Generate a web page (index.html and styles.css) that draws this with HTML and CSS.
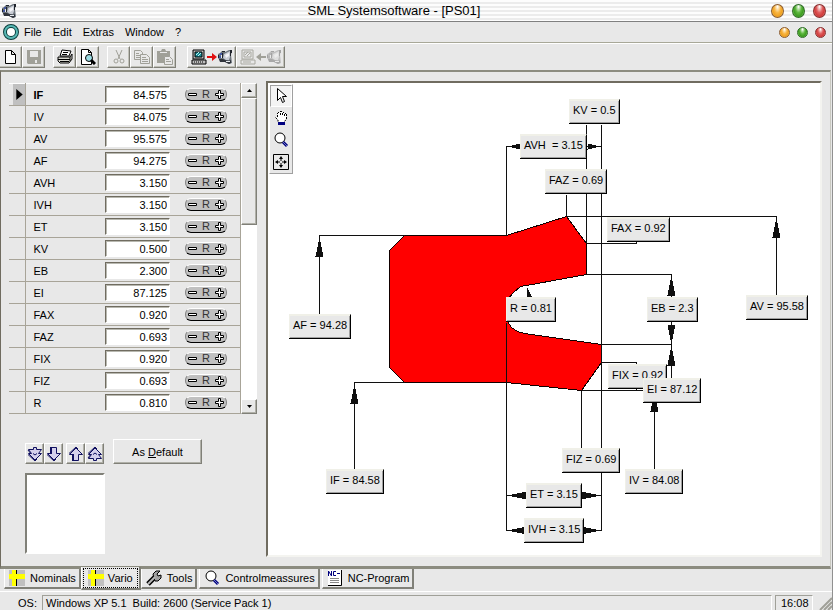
FILE: index.html
```html
<!DOCTYPE html>
<html lang="en">
<head>
    <meta charset="UTF-8">
    <meta name="viewport" content="width=device-width, initial-scale=1.0">
    <title>SML Systemsoftware - [PS01]</title>
    <link rel="stylesheet" href="styles.css">
</head>
<body>
    <!-- shared icons -->
    <svg class="sprite" aria-hidden="true">
        <symbol id="machine" viewBox="0 0 16 16">
            <path d="M1 5 3 4 5 2 8 3 12 1 15 1 14 6 15 14 12 15 8 13 3 12 1 9Z" fill="#6c747c"/>
            <path d="M7 5 13 2 13 8 12 11 9 11 6 9Z" fill="#c8ccd4"/>
            <path d="M8 6 12 4 12 7 9 9Z" fill="#f4f4f8"/>
            <path d="M5 2h3v1H5ZM1 6h1v3H1ZM5 4h1v5H5ZM13 1h2v3h-1v3h-1Z" fill="#20242c"/>
            <path d="M2 10h4l2 1 4 1 2-1v3l-2 1-4-2H3Z" fill="#30343c"/>
            <path d="M3 4h2v2H3ZM2 7h2v2H2Z" fill="#4458a0"/>
            <path d="M4 6h1v3H4ZM9 12h4v1H9Z" fill="#e8ecf0"/>
        </symbol>
        <symbol id="pc" viewBox="0 0 16 16">
            <path d="M2 1h11v9H2Z" fill="#c0c0c0" stroke="#000"/>
            <path d="M4 3h7v5H4Z" fill="#1b8c96" stroke="#000"/>
            <path d="M5 6 8 3M7 7l3-3" stroke="#b8f4f4"/>
            <path d="M1 11h14v4H1Z" fill="#c0c0c0" stroke="#000"/>
            <path d="M3 13h10" stroke="#000" stroke-dasharray="1 1"/>
        </symbol>
        <symbol id="pc-off" viewBox="0 0 16 16">
            <path d="M2 1h11v9H2ZM4 3h7v5H4ZM1 11h14v4H1ZM5 6l3-3M7 7l3-3M3 13h8" fill="none" stroke="#a8a8a0"/>
        </symbol>
        <symbol id="lens" viewBox="0 0 16 16">
            <circle cx="7" cy="6" r="5" fill="#fff" stroke="#000"/>
            <path d="m10 10 4 4" stroke="#000080" stroke-width="3"/>
            <path d="m10 10 4 4" stroke="#7078c0"/>
        </symbol>
        <symbol id="cross" viewBox="0 0 16 16">
            <path d="M0 0h16v16H0Z" fill="#c0c0c0"/>
            <path d="M0 4h16v5H0ZM3 0h4v16H3Z" fill="#ff0"/>
            <path d="M7 0h1v4H7ZM7 9h1v7H7Z" fill="#000"/>
        </symbol>
        <symbol id="minus" viewBox="0 0 11 11">
            <path d="M1.500 4.500h8v2h-8Z" fill="#fff" stroke="#000"/>
        </symbol>
        <symbol id="plus" viewBox="0 0 11 11">
            <path d="M4.500 1.500h2v3h3v2h-3v3h-2v-3h-3v-2h3Z" fill="#fff" stroke="#000"/>
        </symbol>
        <symbol id="arrow" viewBox="0 0 16 16">
            <path d="M5.500 1.500h5v6h4L8 14 1.500 7.500h4Z" fill="#d4d0ec" stroke="#101060"/>
            <path d="M1 8.500 8 15l2-2" fill="none" stroke="#101060"/>
            <path d="M5 1v7" stroke="#101060" stroke-width="2"/>
        </symbol>
        <symbol id="arrow2" viewBox="0 0 16 16">
            <path d="M6.500 1.500h3v2h5l-3 4h3L8 14 1.500 7.500h3l-3-4h5Z" fill="#d4d0ec" stroke="#101060"/>
            <path d="m1 4 3 4M1 8.500 8 15l2-2" fill="none" stroke="#101060"/>
            <path d="M6 7.500 8 9l2-1.500" fill="none" stroke="#101060"/>
        </symbol>
    </svg>

    <header class="titlebar">
        <svg class="icon"><use href="#machine"/></svg>
        <h1>SML Systemsoftware - [PS01]</h1>
        <div class="orbs">
            <button class="orb yellow" aria-label="Minimize"></button>
            <button class="orb green" aria-label="Maximize"></button>
            <button class="orb red" aria-label="Close"></button>
        </div>
    </header>

    <nav class="menubar">
        <svg class="icon" viewBox="0 0 16 16">
            <circle cx="8" cy="8" r="6" fill="#fff" stroke="#0a3c3c" stroke-width="4"/>
            <circle cx="8" cy="8" r="6" fill="none" stroke="#58b8b4" stroke-width="2"/>
        </svg>
        <button>File</button>
        <button>Edit</button>
        <button>Extras</button>
        <button>Window</button>
        <button>?</button>
        <div class="orbs small">
            <button class="orb yellow" aria-label="Minimize document"></button>
            <button class="orb green" aria-label="Restore document"></button>
            <button class="orb red" aria-label="Close document"></button>
        </div>
    </nav>

    <div class="toolbar">
        <div class="group">
            <button aria-label="New">
                <svg class="icon" viewBox="0 0 16 16"><path d="M2.500 1.500h6l4 4v9h-10ZM8.500 1.500v4h4" fill="#fff" stroke="#000"/></svg>
            </button>
            <button aria-label="Save" disabled>
                <svg class="icon" viewBox="0 0 16 16"><path d="M1 1h14v14H2L1 14Z" fill="#a0a098"/><path d="M4 2h8v6H4ZM9 11h2v3H9Z" fill="#e8e8e8"/></svg>
            </button>
        </div>
        <div class="group">
            <button aria-label="Print">
                <svg class="icon" viewBox="0 0 16 16"><path d="m5 1 9 1-2 5H3Z" fill="#fff" stroke="#000"/><path d="M6 3.500h5M5 5.500h5" stroke="#000"/><path d="M1 8h12l2-3v5l-3 4H3l-2-2Z" fill="#d8d8d0" stroke="#000"/><path d="M1 10.500h12M3 12.500h9M13 8v4" stroke="#000"/></svg>
            </button>
            <button aria-label="Preview">
                <svg class="icon" viewBox="0 0 16 16"><path d="M1.500.5h7l3 3v12h-10ZM8.500.5v3h3" fill="#fff" stroke="#000"/><circle cx="9" cy="9" r="3.500" fill="#9cdce4" stroke="#000"/><path d="m11 11 4 4" stroke="#000" stroke-width="3"/></svg>
            </button>
        </div>
        <div class="group">
            <button aria-label="Cut" disabled>
                <svg class="icon" viewBox="0 0 16 16"><path d="m5 1 4 9M11 1 7 10" fill="none" stroke="#a0a098"/><circle cx="5" cy="12" r="2" fill="none" stroke="#a0a098"/><circle cx="11" cy="12" r="2" fill="none" stroke="#a0a098"/></svg>
            </button>
            <button aria-label="Copy" disabled>
                <svg class="icon" viewBox="0 0 16 16"><path d="M.5 1.500h6l2 2v7h-8ZM2 4.500h3M2 6.500h4M2 8.500h4" fill="none" stroke="#a0a098"/><path d="M6.500 5.500h6l3 3v6h-9Z" fill="#e8e8e8" stroke="#a0a098"/><path d="M8 8.500h4M8 10.500h6M8 12.500h6" stroke="#a0a098"/></svg>
            </button>
            <button aria-label="Paste" disabled>
                <svg class="icon" viewBox="0 0 16 16"><path d="M0 2h4l1-2h3l1 2h4v12H0Z" fill="#a0a098"/><path d="M3 3.500h7" stroke="#e8e8e8"/><path d="M7.500 7.500h5l3 3v5h-8Z" fill="#e8e8e8" stroke="#a0a098"/><path d="M9 10.500h3M9 12.500h5" stroke="#a0a098"/></svg>
            </button>
        </div>
        <div class="group transfer">
            <button class="wide" aria-label="Send to machine">
                <svg class="icon"><use href="#pc"/></svg>
                <svg class="mini" viewBox="0 0 10 10"><path d="M0 4h5V1l5 4-5 4V6H0Z" fill="#e01010"/></svg>
                <svg class="icon"><use href="#machine"/></svg>
            </button>
            <button class="wide" aria-label="Read from machine" disabled>
                <svg class="icon"><use href="#pc-off"/></svg>
                <svg class="mini" viewBox="0 0 10 10"><path d="M10 4H5V1L0 5l5 4V6h5Z" fill="#a0a098"/></svg>
                <svg class="icon faded"><use href="#machine"/></svg>
            </button>
        </div>
    </div>

    <main class="page">
        <section class="sidebar">
            <div class="grid">
                <table>
                    <tbody id="params"></tbody>
                </table>
                <div class="scrollbar">
                    <button aria-label="Scroll up"><svg viewBox="0 0 5 3"><path d="M0 3h5L2.500 0Z"/></svg></button>
                    <div class="thumb"></div>
                    <button class="down" aria-label="Scroll down"><svg viewBox="0 0 5 3"><path d="M0 0h5L2.500 3Z"/></svg></button>
                </div>
            </div>
            <div class="actions">
                <div class="pair">
                    <button aria-label="Much smaller"><svg class="icon"><use href="#arrow2"/></svg></button>
                    <button aria-label="Smaller"><svg class="icon"><use href="#arrow"/></svg></button>
                </div>
                <div class="pair up">
                    <button aria-label="Larger"><svg class="icon"><use href="#arrow"/></svg></button>
                    <button aria-label="Much larger"><svg class="icon"><use href="#arrow2"/></svg></button>
                </div>
                <button class="default">As <u>D</u>efault</button>
            </div>
            <div class="preview"></div>
        </section>

        <section class="canvas">
            <svg class="drawing" viewBox="0 0 552 472" width="552" height="472">
                <g transform="translate(.5 .5)">
                    <path class="part" d="M136 152H238L298 133L318 160V191L258 202L252 203L245 209L239 216V238L243 244L249 248L256 250L333 261V279L313 307L238 299H136L121 284V167Z"/>
                    <path class="dim" d="M136 152H51V231M136 299H86V386M238 152V63H252M318 63H333
                        M318 41V160M333 41V447M298 111V133H508V212M318 160H368V158
                        M318 191H403V296M333 261H403M333 279H368V281M313 307H386V386M368 307V305
                        M313 307V365M238 239V447M238 412H333M238 447H333"/>
                    <g class="tip">
                        <path d="M51 154 55 173H47ZM86 301 90 320H82ZM508 134 512 154H504Z"/>
                        <path d="M403 192 407 212H399ZM403 261 407 241H399ZM403 262 407 282H399ZM386 308 390 328H382Z"/>
                        <path d="M239 63 252 60V66ZM332 63 319 60V66ZM258 203 264 215H259Z"/>
                        <path d="M239 412 258 408V416ZM332 412 313 408V416ZM239 447 258 443V451ZM332 447 313 443V451Z"/>
                    </g>
                </g>
            </svg>
            <span class="tag kv">KV = 0.5</span>
            <span class="tag avh">AVH&nbsp; = 3.15</span>
            <span class="tag faz">FAZ = 0.69</span>
            <span class="tag fax">FAX = 0.92</span>
            <span class="tag av">AV = 95.58</span>
            <span class="tag eb">EB = 2.3</span>
            <span class="tag r">R = 0.81</span>
            <span class="tag af">AF = 94.28</span>
            <span class="tag if">IF = 84.58</span>
            <span class="tag fix">FIX = 0.92</span>
            <span class="tag ei">EI = 87.12</span>
            <span class="tag fiz">FIZ = 0.69</span>
            <span class="tag iv">IV = 84.08</span>
            <span class="tag et">ET = 3.15</span>
            <span class="tag ivh">IVH = 3.15</span>

            <div class="palette">
                <button class="pressed" aria-label="Select"><svg class="icon" viewBox="0 0 16 16"><path d="M4.500.5v12l3-3 2 5 2-1-2-5h4Z" fill="#fff" stroke="#000"/></svg></button>
                <button aria-label="Pan"><svg class="icon" viewBox="0 0 16 16"><path d="M5 12V10L2.500 7.500 4 7l1 1V2.500h2V1.500h2v1h2v1h2V9l-2 3Z" fill="#fff"/><path d="M5 11.500V10L2.500 7.500M4.500 7V3M5 2.500h1M7 1.500h2M10 2.500h1M12 3.500h1M13.500 4v5l-2 2.500M7.500 3v3M9.500 3v3M11.500 4v3" fill="none" stroke="#000" stroke-dasharray="2 1"/><path d="M5 12h7v3H5Z" fill="#000080"/></svg></button>
                <button aria-label="Zoom"><svg class="icon"><use href="#lens"/></svg></button>
                <button aria-label="Fit"><svg class="icon" viewBox="0 0 16 16"><path d="M.5.5h15v15H.5Z" fill="#e8e8e8" stroke="#000"/><path d="M8 2 6 5h4ZM8 14l-2-3h4ZM2 8l3-2v4ZM14 8l-3-2v4Z"/><path d="M8 5v2M8 9v2M5 8h2M9 8h2" stroke="#000"/></svg></button>
            </div>
        </section>
    </main>

    <nav class="tabs">
        <button><svg class="icon"><use href="#cross"/></svg>Nominals</button>
        <button class="active"><span><svg class="icon"><use href="#cross"/></svg>Vario</span></button>
        <button><svg class="icon" viewBox="0 0 16 16"><path d="m2 14 7-7" stroke="#000" stroke-width="5"/><path d="M8 8 7 4l3-3h4l-3 3 1 2 3-1v3l-3 3H9Z" fill="#a0a0a0" stroke="#000"/><path d="m2 14 7-7" stroke="#b8b8b8" stroke-width="2"/></svg>Tools</button>
        <button><svg class="icon"><use href="#lens"/></svg>Controlmeassures</button>
        <button><svg class="icon" viewBox="0 0 16 16"><path d="M1 0h13v15H1Z" fill="#fff"/><path d="M14.500 0v15.500H1" fill="none" stroke="#000"/><path d="M1.500 6V1l3 5V1M9 1.500H6.500v4H9M10 3.500h3" fill="none" stroke="#000080"/><path d="M3 8.500h9M3 10.500h9M3 12.500h9" stroke="#888"/></svg>NC-Program</button>
    </nav>

    <footer class="status">
        <span class="os">OS:</span>
        <span class="field">Windows XP 5.1&nbsp; Build: 2600 (Service Pack 1)</span>
        <span class="field clock">16:08</span>
        <svg class="grip" viewBox="0 0 13 13"><path d="M1 13 13 1M5 13l8-8M9 13l4-4" stroke="#a0a098" stroke-width="2"/></svg>
    </footer>

    <script>
        var params = [
            ["IF", "84.575"], ["IV", "84.075"], ["AV", "95.575"], ["AF", "94.275"],
            ["AVH", "3.150"], ["IVH", "3.150"], ["ET", "3.150"], ["KV", "0.500"],
            ["EB", "2.300"], ["EI", "87.125"], ["FAX", "0.920"], ["FAZ", "0.693"],
            ["FIX", "0.920"], ["FIZ", "0.693"], ["R", "0.810"]
        ];
        var rows = "";

        params.forEach(function (p, i) {
            var id = "p" + p[0];
            rows += '<tr' + (i === 0 ? ' class="current"' : '') + '>' +
                '<td class="mark">' + (i === 0 ? '<svg viewBox="0 0 7 12"><path d="M0 0v12l7-6Z"/></svg>' : '') + '</td>' +
                '<td class="name"><label for="' + id + '">' + p[0] + '</label></td>' +
                '<td class="value"><input type="text" id="' + id + '" value="' + p[1] + '"></td>' +
                '<td><div class="spin">' +
                '<button aria-label="Decrease ' + p[0] + '"><svg><use href="#minus"/></svg></button>' +
                '<button>R</button>' +
                '<button aria-label="Increase ' + p[0] + '"><svg><use href="#plus"/></svg></button>' +
                '</div></td></tr>';
        });
        document.getElementById("params").innerHTML = rows;
    </script>
</body>
</html>
```
FILE: styles.css
```css
* {
    box-sizing: border-box;
}
body {
    margin: 0;
    min-height: 100vh;
    display: flex;
    flex-direction: column;
    background: #e8e8e8;
    border-right: 1px solid #909090;
    font-family: "Liberation Sans", Arial, sans-serif;
    font-size: 11px;
    line-height: 14px;
    color: #000;
}
button {
    font: inherit;
    color: inherit;
    padding: 0;
    border: 0;
    background: none;
}
svg {
    display: block;
    flex: none;
}
.sprite {
    position: absolute;
    width: 0;
    height: 0;
}
.icon {
    width: 16px;
    height: 16px;
}

/* title and menu */
.titlebar {
    display: flex;
    align-items: center;
    height: 22px;
    padding: 0 6px 0 1px;
    border-bottom: 1px solid #808080;
    background: repeating-linear-gradient(#fdfdfd 0 2px, #ececec 2px 4px);
}
.titlebar h1 {
    flex: 1;
    margin: 0;
    font-size: 13px;
    font-weight: normal;
    line-height: 20px;
    text-align: center;
}
.orbs {
    display: flex;
    gap: 8px;
}
.orbs.small {
    gap: 7px;
    margin-left: auto;
}
.orb {
    width: 13px;
    height: 14px;
    border: 1px solid #8c5c30;
    border-radius: 50%;
}
.small .orb {
    width: 11px;
    height: 11px;
}
.yellow {
    background: radial-gradient(ellipse at 50% 15%, #fff 0, #f8b848 40%, #f0a020 65%, #fff080 100%);
}
.green {
    border-color: #306c28;
    background: radial-gradient(ellipse at 50% 15%, #fff 0, #60b840 40%, #3c9c20 65%, #c0f890 100%);
}
.red {
    border-color: #883030;
    background: radial-gradient(ellipse at 50% 15%, #fff 0, #e06060 40%, #d03c3c 65%, #ffb0a0 100%);
}
.menubar {
    display: flex;
    align-items: center;
    gap: 11px;
    height: 21px;
    padding: 0 6px 0 3px;
    border-bottom: 1px solid #a8a898;
}
.menubar .icon {
    margin-right: -6px;
}

/* toolbar */
.toolbar {
    display: flex;
    gap: 8px;
    height: 27px;
    padding: 2px 0;
    border-top: 1px solid #fff;
}
.group {
    display: flex;
}
.group:first-child {
    margin-left: -1px;
}
.group button {
    display: flex;
    align-items: center;
    justify-content: center;
    width: 23px;
    height: 22px;
    border: 1px solid;
    border-color: #fff #808078 #808078 #fff;
    box-shadow: inset -1px -1px #c0c0b8;
}
.group .wide {
    width: 49px;
}
.transfer {
    margin-left: 3px;
}
.mini {
    width: 10px;
    height: 10px;
}
.faded {
    opacity: .35;
    filter: grayscale(1);
}

/* work area */
.page {
    flex: 1;
    display: flex;
    gap: 9px;
    margin-right: 1px;
    padding: 9px 8px 9px 8px;
    border: solid;
    border-width: 2px 1px 3px 1px;
    border-color: #8c8c80 #c8c8c0 #8c8c80 #706c60;
}
.sidebar {
    width: 248px;
    padding-top: 2px;
}
.grid {
    display: flex;
}
table {
    flex: 1;
    border-collapse: collapse;
}
td {
    height: 22px;
    padding: 0;
    border-top: 1px solid #fff;
    border-bottom: 1px solid #a8a498;
}
.mark {
    width: 16px;
    border-right: 1px solid #a8a498;
}
.mark svg {
    width: 7px;
    height: 11px;
    margin-left: 7px;
}
.current .mark {
    background: linear-gradient(90deg, #e8e8e8 4px, #c0c0c0 4px);
}
.name {
    width: 80px;
    padding-left: 8px;
}
.current .name {
    font-weight: bold;
}
.value {
    width: 80px;
}
.value input {
    display: block;
    width: 65px;
    height: 17px;
    padding: 0 2px;
    border: 1px solid;
    border-color: #706c60 #fff #fff #706c60;
    box-shadow: inset 1px 1px #b8b8b0;
    background: #fff;
    font: inherit;
    text-align: right;
}
.spin {
    display: flex;
    justify-content: space-between;
    align-items: center;
    width: 42px;
    height: 13px;
    padding: 0 1px;
    border: 1px solid #888;
    border-top-color: #fff;
    border-bottom-color: #000;
    border-radius: 6px;
    background: #c0c0c0;
    color: #333;
    line-height: 11px;
}
.spin svg {
    width: 11px;
    height: 11px;
}
.scrollbar {
    display: flex;
    flex-direction: column;
    width: 17px;
    border-left: 1px solid #a8a498;
    background: #fff;
}
.scrollbar button, .thumb {
    border: 1px solid;
    border-color: #fff #808078 #808078 #fff;
    box-shadow: inset -1px -1px #b0b0a8;
    background: #e8e8e8;
}
.scrollbar button {
    display: flex;
    align-items: center;
    justify-content: center;
    height: 15px;
}
.scrollbar svg {
    width: 5px;
    height: 3px;
}
.thumb {
    height: 127px;
}
.scrollbar .down {
    margin-top: auto;
}
.actions {
    display: flex;
    align-items: flex-end;
    gap: 3px;
    margin: 25px 0 9px 16px;
}
.pair {
    display: flex;
}
.pair button, .default {
    border: 1px solid;
    border-color: #fff #808078 #808078 #fff;
    box-shadow: inset -1px -1px #b0b0a8;
}
.pair button {
    display: flex;
    align-items: center;
    justify-content: center;
    width: 19px;
    height: 21px;
}
.up svg {
    transform: scaleY(-1);
}
.default {
    width: 89px;
    height: 25px;
    margin-left: 6px;
}
.preview {
    width: 80px;
    height: 81px;
    margin-left: 16px;
    border: 2px solid;
    border-color: #808078 #fff #fff #808078;
    background: #fff;
}

/* drawing */
.canvas {
    position: relative;
    flex: 1;
    border: 2px solid;
    border-color: #706c60 #f4f4f0 #f4f4f0 #706c60;
    background: #fff;
    overflow: hidden;
}
.drawing {
    position: absolute;
    left: 0;
    top: 0;
    shape-rendering: crispEdges;
}
.part {
    fill: #f00;
    stroke: #100;
}
.dim {
    fill: none;
    stroke: #101010;
}
.tip {
    fill: #101010;
}
.tag {
    position: absolute;
    height: 25px;
    padding: 2px 3px 0 4px;
    border: solid;
    border-width: 1px 1px 1px 0;
    border-color: #f0f0e8 #000 #000;
    box-shadow: inset 1px 1px #f0f0e8, inset -1px -1px #a0a0a0;
    background: #e8e8e8;
    line-height: 16px;
    white-space: nowrap;
}
.kv { left: 301px; top: 16px; }
.avh { left: 252px; top: 51px; }
.faz { left: 277px; top: 86px; }
.fax { left: 339px; top: 134px; }
.av { left: 478px; top: 212px; }
.eb { left: 379px; top: 214px; }
.r { left: 238px; top: 214px; }
.af { left: 21px; top: 231px; }
.if { left: 58px; top: 386px; }
.fix { left: 340px; top: 281px; }
.ei { left: 375px; top: 295px; }
.fiz { left: 294px; top: 365px; }
.iv { left: 357px; top: 386px; }
.et { left: 258px; top: 400px; }
.ivh { left: 256px; top: 435px; }
.palette {
    position: absolute;
    left: 1px;
    top: 1px;
    display: flex;
    flex-direction: column;
    border: 1px solid;
    border-color: #fff #a0a0a0 #a0a0a0 #fff;
    background: #e8e8e8;
}
.palette button {
    display: flex;
    align-items: center;
    justify-content: center;
    width: 22px;
    height: 22px;
}
.palette .pressed {
    border: 1px solid;
    border-color: #a0a0a0 #fff #fff #a0a0a0;
    background: #f4f4f4;
}

/* bottom tabs */
.tabs {
    display: flex;
    align-items: flex-start;
    gap: 2px;
    height: 23px;
    padding-left: 4px;
    border-bottom: 1px solid #fff;
}
.tabs button {
    display: flex;
    align-items: center;
    gap: 5px;
    height: 20px;
    padding: 0 3px 0 4px;
    border: solid;
    border-width: 0 2px 2px 1px;
    border-color: #808078 #808078 #808078 #fff;
}
.tabs .active {
    height: 23px;
    margin: -2px -2px 0;
    padding: 0 1px;
    border-color: #fff #808078 #808078 #fff;
    background: #e8e8e8;
}
.active span {
    display: flex;
    align-items: center;
    gap: 4px;
    padding: 1px 4px 1px 4px;
    border: 1px dotted #000;
}

/* status bar */
.status {
    display: flex;
    align-items: flex-end;
    gap: 3px;
    height: 18px;
}
.os {
    width: 39px;
    padding-left: 18px;
}
.field {
    flex: 1;
    height: 15px;
    padding: 0 3px;
    border: solid;
    border-width: 1px 1px 0;
    border-color: #a0a098 #fff #fff #a0a098;
}
.clock {
    flex: none;
    width: 38px;
    padding-left: 5px;
}
.grip {
    width: 13px;
    height: 13px;
    margin-left: 3px;
}
```
